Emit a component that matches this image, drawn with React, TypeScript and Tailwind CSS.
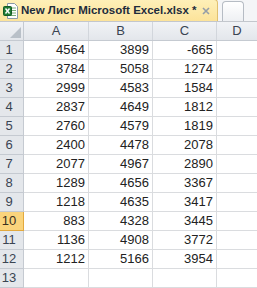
const rows = [
  [4564, 3899, -665],
  [3784, 5058, 1274],
  [2999, 4583, 1584],
  [2837, 4649, 1812],
  [2760, 4579, 1819],
  [2400, 4478, 2078],
  [2077, 4967, 2890],
  [1289, 4656, 3367],
  [1218, 4635, 3417],
  [883, 4328, 3445],
  [1136, 4908, 3772],
  [1212, 5166, 3954]
];

const activeRow = 10;

function ExcelIcon() {
  return (
    <svg width="15" height="16" viewBox="0 0 15 16">
      <path d="M4.5 0.5h7l3 3v12h-10z" fill="#ffffff" stroke="#8a9aa8" />
      <path d="M7 5h6M7 7.5h6M7 10h6M7 12.5h6" stroke="#7bb07b" strokeWidth="1" />
      <rect x="0.5" y="3.5" width="8" height="9" rx="1" fill="#1f7a35" stroke="#145a25" />
      <path d="M2.5 5.5l4 5M6.5 5.5l-4 5" stroke="#ffffff" strokeWidth="1.4" />
    </svg>
  );
}

export default function App() {
  return (
    <main
      className="h-[288px] w-[257px] overflow-hidden bg-white text-[#222]"
      style={{ fontFamily: '"Liberation Sans", Arial, sans-serif' }}
    >
      <div className="flex h-[22px] items-end border-b border-[#c3c7cd] bg-[#f4f5f7]">
        <div className="flex h-[22px] w-[218px] shrink-0 items-center rounded-tr-[4px] border-r border-t border-[#e0c070] bg-gradient-to-b from-[#fef0b8] to-[#fce39a] pl-[3px]">
          <ExcelIcon />
          <span className="ml-[3px] text-[11.5px] font-bold whitespace-nowrap text-[#1e2c3c]">
            New Лист Microsoft Excel.xlsx *
          </span>
          <svg className="ml-[6px]" width="8" height="8" viewBox="0 0 8 8">
            <path d="M1 1l6 6M7 1l-6 6" stroke="#959ea8" strokeWidth="1.6" />
          </svg>
        </div>
        <div className="ml-[4px] h-[20px] w-[22px] rounded-t-[4px] border border-b-0 border-[#b6bcc4] bg-gradient-to-b from-white to-[#eef0f3]" />
      </div>

      <div className="flex h-[19px] border-b border-[#c5cad1] bg-gradient-to-b from-[#f1f3f6] to-[#e3e6eb] text-[13px] text-[#3a4452]">
        <div className="flex w-[24px] items-end justify-end border-r border-[#c5cad1] pr-[2px] pb-[2px]">
          <svg width="11" height="11" viewBox="0 0 11 11">
            <path d="M11 0V11H0z" fill="#b9c0c8" />
          </svg>
        </div>
        {["A", "B", "C"].map((letter, i) => (
          <div
            key={letter}
            className={`flex items-center justify-center border-r border-[#d2d6dc] ${i === 0 ? "w-[65px]" : "w-[64px]"}`}
          >
            {letter}
          </div>
        ))}
        <div className="flex flex-1 items-center justify-center">D</div>
      </div>

      {[...rows, null].map((row, index) => {
        const number = index + 1;
        const active = number === activeRow;
        return (
          <div key={number} className="flex h-[19px] text-[13px]">
            <div
              className={`flex w-[24px] items-center justify-center border-b border-r pr-[5px] ${
                active
                  ? "border-[#e3a93d] bg-[#fad47c] text-[#3a3020]"
                  : "border-[#c5cad1] bg-[#e4e7eb] text-[#3a4452]"
              }`}
            >
              {number}
            </div>
            {[0, 1, 2].map((col) => (
              <div
                key={col}
                className={`flex items-center justify-end border-r border-b border-[#dadcdf] pr-[3px] ${
                  col === 0 ? "w-[65px]" : "w-[64px]"
                }`}
              >
                {row ? row[col] : ""}
              </div>
            ))}
            <div className="flex-1 border-b border-[#dadcdf]" />
          </div>
        );
      })}
    </main>
  );
}
